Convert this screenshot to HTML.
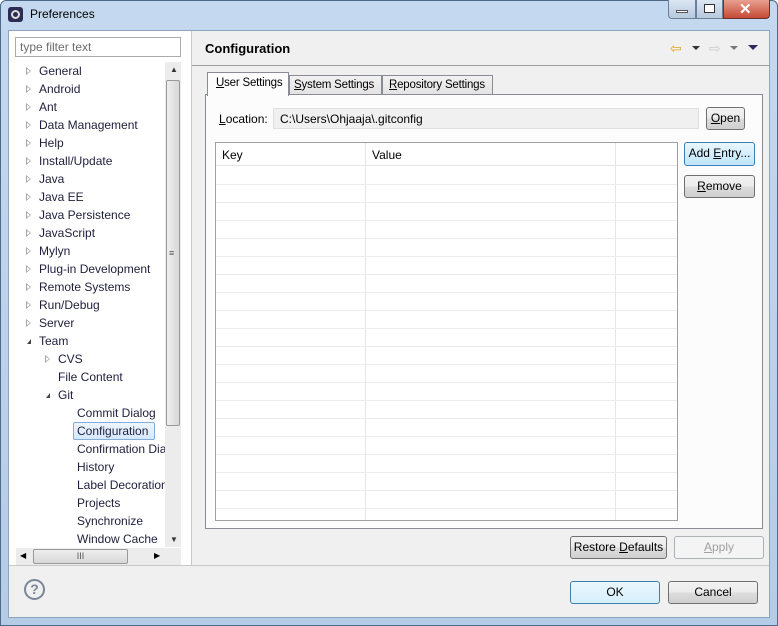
<!DOCTYPE html>
<html><head><style>
*{box-sizing:border-box}
body{margin:0;width:778px;height:626px;overflow:hidden;font-family:"Liberation Sans",Tahoma,sans-serif;font-size:12px;color:#000;background:#fff}
.a{position:absolute}
.win{left:0;top:0;width:778px;height:626px;background:linear-gradient(#c4d9ef,#b5cce6);border:1px solid #4d6a8a;border-radius:6px 6px 0 0}
.in{left:8px;top:30px;width:762px;height:588px;background:#f0f0f0;border:1px solid #8ea5bf}
.btn{position:absolute;border:1px solid #707070;border-radius:3px;background:linear-gradient(#f2f2f2 0%,#ebebeb 50%,#dddddd 51%,#cfcfcf 100%);text-align:center;line-height:21px;font-size:12px;white-space:nowrap}
.tr{position:absolute;font-size:12px;line-height:18px;white-space:nowrap;color:#1e1e3c}
.ar{position:absolute;width:0;height:0;border-top:4px solid transparent;border-bottom:4px solid transparent;border-left:5px solid #a8a8a8}
.ar:after{content:"";position:absolute;left:-4px;top:-2px;border-top:2px solid transparent;border-bottom:2px solid transparent;border-left:3px solid #fff}
.dn{position:absolute;width:0;height:0;border-left:4px solid transparent;border-right:0 solid transparent;border-bottom:5px solid #444}
.row{position:absolute;left:216px;width:461px;height:1px;background:#ececec}
.tab{white-space:nowrap;overflow:hidden;font-size:11.5px;letter-spacing:-0.2px}
u{text-decoration:underline}
</style></head><body>
<div class="a win"></div>
<div class="a" style="left:8px;top:7px;width:15px;height:15px;border-radius:3px;background:#2c2c54"></div>
<div class="a" style="left:11px;top:10px;width:9px;height:9px;border-radius:50%;border:2px solid #ddd"></div>
<div class="a" style="left:30px;top:7px;font-size:12px">Preferences</div>
<div class="a" style="left:668px;top:0;width:28px;height:19px;border:1px solid #6b7f99;border-top:0;border-radius:0 0 0 4px;background:linear-gradient(#dbe6f3,#b7c9de)"></div>
<div class="a" style="left:676px;top:10px;width:12px;height:3px;background:#fff;border:1px solid #555"></div>
<div class="a" style="left:696px;top:0;width:27px;height:19px;border:1px solid #6b7f99;border-top:0;background:linear-gradient(#dbe6f3,#b7c9de)"></div>
<div class="a" style="left:704px;top:4px;width:11px;height:9px;border:1px solid #333;background:#fff"></div>
<div class="a" style="left:723px;top:0;width:47px;height:19px;border:1px solid #6b3030;border-top:0;border-radius:0 0 4px 0;background:linear-gradient(#e8a090,#c44a35)"></div>
<div class="a" style="left:739px;top:0;color:#fff;font-weight:bold;font-size:15px">✕</div>

<div class="a in"></div>
<div class="a" style="left:9px;top:31px;width:183px;height:534px;background:#fff"></div>
<div class="a" style="left:191px;top:31px;width:1px;height:534px;background:#c8c8c8"></div>
<div class="a" style="left:15px;top:37px;width:166px;height:20px;border:1px solid #ababab;background:#fff;color:#6d6d6d;padding:2px 4px;font-size:12px">type filter text</div>
<div class="a" style="left:165px;top:62px;width:16px;height:485px;background:#ececec"></div>
<div class="a" style="left:166px;top:80px;width:14px;height:346px;border:1px solid #999;border-radius:2px;background:linear-gradient(90deg,#eee,#d8d8d8)"></div>
<div class="a" style="left:169px;top:248px;font-size:9px;color:#555">≡</div>
<div class="a" style="left:170px;top:65px;font-size:8px;color:#333">▲</div>
<div class="a" style="left:170px;top:535px;font-size:8px;color:#333">▼</div>
<div class="a" style="left:16px;top:548px;width:165px;height:17px;background:#ececec"></div>
<div class="a" style="left:33px;top:549px;width:95px;height:15px;border:1px solid #999;border-radius:2px;background:linear-gradient(#eee,#d8d8d8);text-align:center;font-size:9px;line-height:13px;color:#555">III</div>
<div class="a" style="left:20px;top:551px;font-size:8px">◀</div>
<div class="a" style="left:154px;top:551px;font-size:8px">▶</div>

<div class="ar" style="left:26px;top:67px"></div><div class="tr" style="left:39px;top:62px">General</div>
<div class="ar" style="left:26px;top:85px"></div><div class="tr" style="left:39px;top:80px">Android</div>
<div class="ar" style="left:26px;top:103px"></div><div class="tr" style="left:39px;top:98px">Ant</div>
<div class="ar" style="left:26px;top:121px"></div><div class="tr" style="left:39px;top:116px">Data Management</div>
<div class="ar" style="left:26px;top:139px"></div><div class="tr" style="left:39px;top:134px">Help</div>
<div class="ar" style="left:26px;top:157px"></div><div class="tr" style="left:39px;top:152px">Install/Update</div>
<div class="ar" style="left:26px;top:175px"></div><div class="tr" style="left:39px;top:170px">Java</div>
<div class="ar" style="left:26px;top:193px"></div><div class="tr" style="left:39px;top:188px">Java EE</div>
<div class="ar" style="left:26px;top:211px"></div><div class="tr" style="left:39px;top:206px">Java Persistence</div>
<div class="ar" style="left:26px;top:229px"></div><div class="tr" style="left:39px;top:224px">JavaScript</div>
<div class="ar" style="left:26px;top:247px"></div><div class="tr" style="left:39px;top:242px">Mylyn</div>
<div class="ar" style="left:26px;top:265px"></div><div class="tr" style="left:39px;top:260px">Plug-in Development</div>
<div class="ar" style="left:26px;top:283px"></div><div class="tr" style="left:39px;top:278px">Remote Systems</div>
<div class="ar" style="left:26px;top:301px"></div><div class="tr" style="left:39px;top:296px">Run/Debug</div>
<div class="ar" style="left:26px;top:319px"></div><div class="tr" style="left:39px;top:314px">Server</div>
<div class="dn" style="left:27px;top:339px"></div><div class="tr" style="left:39px;top:332px">Team</div>
<div class="ar" style="left:45px;top:355px"></div><div class="tr" style="left:58px;top:350px">CVS</div>
<div class="tr" style="left:58px;top:368px">File Content</div>
<div class="dn" style="left:46px;top:393px"></div><div class="tr" style="left:58px;top:386px">Git</div>
<div class="a" style="left:73px;top:422px;width:82px;height:18px;border:1px solid #84acdd;border-radius:2px;background:linear-gradient(#eef5fd,#d6e8fb)"></div>
<div style="position:absolute;left:9px;top:31px;width:156px;height:516px;overflow:hidden">
<div class="tr" style="left:68px;top:373px">Commit Dialog</div>
<div class="tr" style="left:68px;top:391px">Configuration</div>
<div class="tr" style="left:68px;top:409px">Confirmation Dialogs</div>
<div class="tr" style="left:68px;top:427px">History</div>
<div class="tr" style="left:68px;top:445px">Label Decorations</div>
<div class="tr" style="left:68px;top:463px">Projects</div>
<div class="tr" style="left:68px;top:481px">Synchronize</div>
<div class="tr" style="left:68px;top:499px">Window Cache</div>
</div>

<div class="a" style="left:205px;top:41px;font-weight:bold;font-size:13px">Configuration</div>
<div class="a" style="left:192px;top:65px;width:577px;height:1px;background:#a0a0a0"></div>
<div class="a" style="left:670px;top:40px;color:#e0a820;font-size:14px">⇦</div>
<div class="a" style="left:692px;top:46px;border-left:4px solid transparent;border-right:4px solid transparent;border-top:4px solid #333"></div>
<div class="a" style="left:709px;top:40px;color:#ccc;font-size:14px">⇨</div>
<div class="a" style="left:730px;top:46px;border-left:4px solid transparent;border-right:4px solid transparent;border-top:4px solid #777"></div>
<div class="a" style="left:748px;top:45px;border-left:5px solid transparent;border-right:5px solid transparent;border-top:5px solid #2c2c60"></div>

<div class="a" style="left:205px;top:94px;width:558px;height:435px;border:1px solid #898c95;background:#fcfcfc"></div>
<div class="a tab" style="left:289px;top:75px;width:93px;height:20px;border:1px solid #898c95;background:linear-gradient(#f2f2f2,#e3e3e3);padding:3px 4px"><u>S</u>ystem Settings</div>
<div class="a tab" style="left:382px;top:75px;width:111px;height:20px;border:1px solid #898c95;background:linear-gradient(#f2f2f2,#e3e3e3);padding:3px 6px"><u>R</u>epository Settings</div>
<div class="a tab" style="left:207px;top:72px;width:82px;height:24px;border:1px solid #898c95;border-bottom:0;background:#fcfcfc;padding:4px 8px"><u>U</u>ser Settings</div>
<div class="a" style="left:219px;top:112px"><u>L</u>ocation:</div>
<div class="a" style="left:273px;top:108px;width:426px;height:21px;border:1px solid #e0e0e0;background:#f0f0f0;padding:3px 6px">C:\Users\Ohjaaja\.gitconfig</div>
<div class="btn" style="left:706px;top:107px;width:39px;height:23px"><u>O</u>pen</div>

<div class="a" style="left:215px;top:142px;width:463px;height:379px;border:1px solid #a0a0a0;background:#fff"></div>
<div class="a" style="left:216px;top:143px;width:461px;height:23px;background:#fff;border-bottom:1px solid #e5e5e5"></div>
<div class="a" style="left:222px;top:148px">Key</div>
<div class="a" style="left:372px;top:148px">Value</div>
<div class="a" style="left:365px;top:143px;width:1px;height:377px;background:#e5e5e5"></div>
<div class="a" style="left:615px;top:143px;width:1px;height:377px;background:#e5e5e5"></div>
<div class="row" style="top:184px"></div><div class="row" style="top:202px"></div><div class="row" style="top:220px"></div><div class="row" style="top:238px"></div><div class="row" style="top:256px"></div><div class="row" style="top:274px"></div><div class="row" style="top:292px"></div><div class="row" style="top:310px"></div><div class="row" style="top:328px"></div><div class="row" style="top:346px"></div><div class="row" style="top:364px"></div><div class="row" style="top:382px"></div><div class="row" style="top:400px"></div><div class="row" style="top:418px"></div><div class="row" style="top:436px"></div><div class="row" style="top:454px"></div><div class="row" style="top:472px"></div><div class="row" style="top:490px"></div><div class="row" style="top:508px"></div>

<div class="btn" style="left:684px;top:142px;width:71px;height:24px;border-color:#3c7fb1;background:linear-gradient(#eaf6fd,#bee6fd)">Add <u>E</u>ntry...</div>
<div class="btn" style="left:684px;top:175px;width:71px;height:23px"><u>R</u>emove</div>
<div class="btn" style="left:570px;top:536px;width:97px;height:23px">Restore <u>D</u>efaults</div>
<div class="btn" style="left:674px;top:536px;width:90px;height:23px;border-color:#adb2b5;background:#f4f4f4;color:#a0a0a0"><u>A</u>pply</div>

<div class="a" style="left:9px;top:565px;width:760px;height:1px;background:#c8c8c8"></div>
<div class="a" style="left:24px;top:579px;width:21px;height:21px;border:2px solid #7b8698;border-radius:50%;text-align:center;font-weight:bold;font-size:14px;line-height:17px;color:#7b8698">?</div>
<div class="btn" style="left:570px;top:581px;width:90px;height:23px;border-color:#3c7fb1;background:linear-gradient(#eaf6fd,#d7effc)">OK</div>
<div class="btn" style="left:668px;top:581px;width:90px;height:23px">Cancel</div>
</body></html>
